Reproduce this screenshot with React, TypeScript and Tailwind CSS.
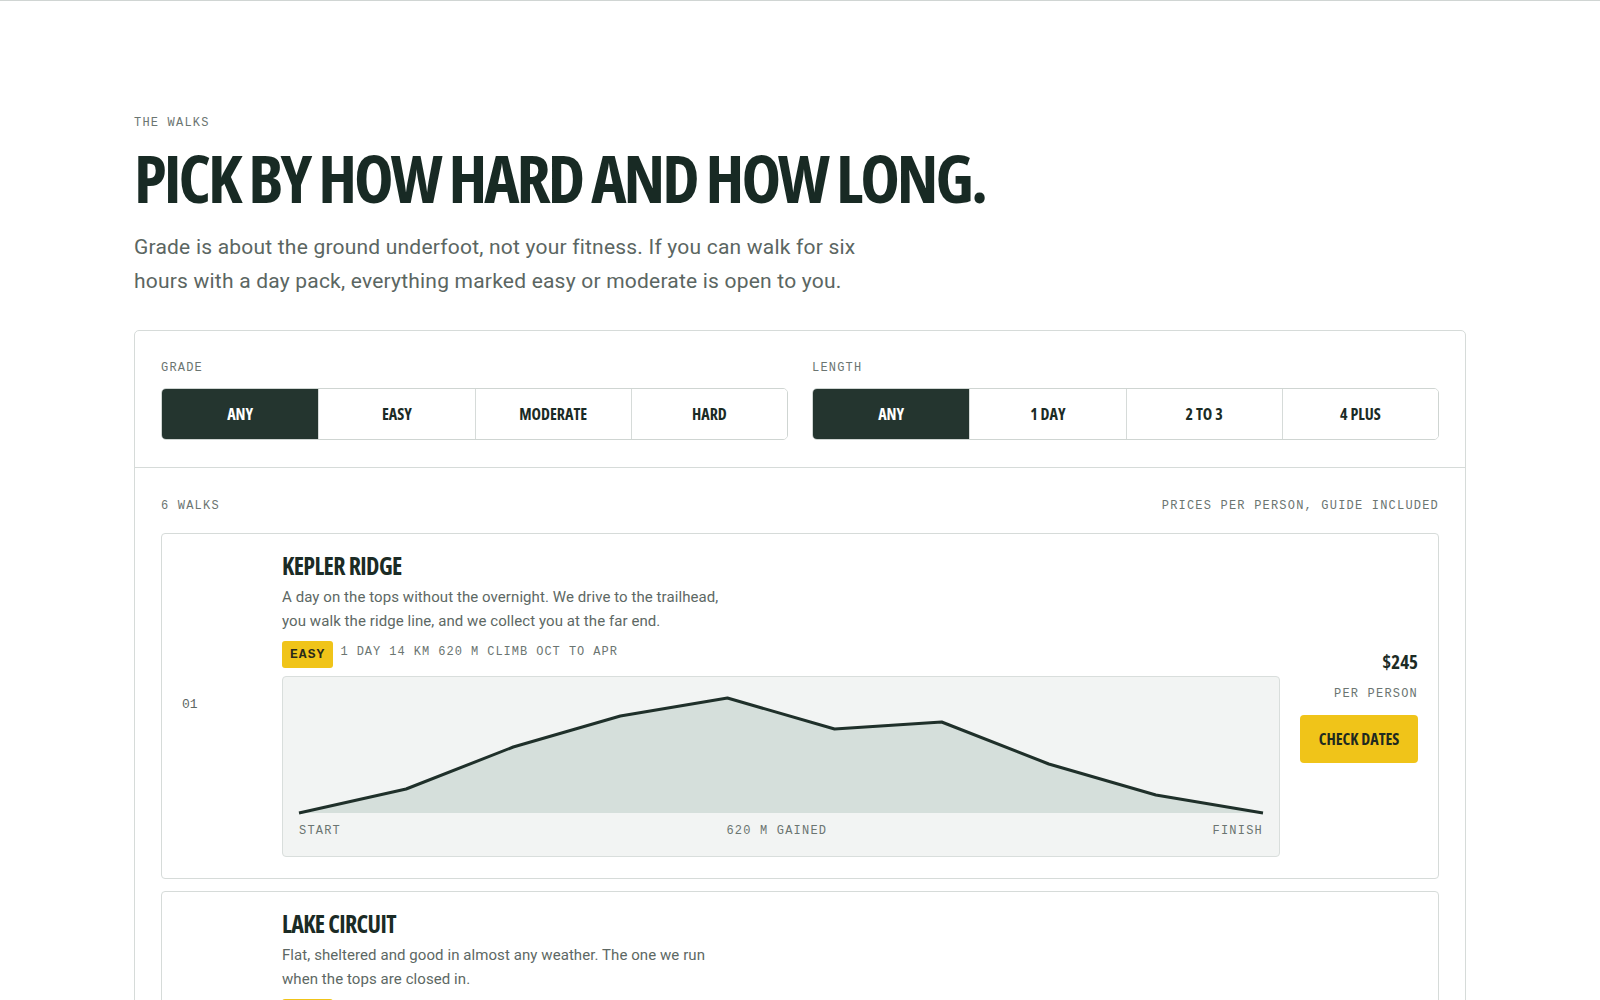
import { useState } from "react";

const display = "font-['Open_Sans','Roboto',sans-serif] font-stretch-[75%]";
const body = "font-['Roboto','Inter',sans-serif]";
const mono = "font-['Liberation_Mono','DejaVu_Sans_Mono',monospace]";

type Walk = {
  id: string;
  name: string;
  blurb: string[];
  grade: "EASY" | "MODERATE" | "HARD";
  meta: string;
  climb: string;
  price: string;
  profile: number[];
};

const walks: Walk[] = [
  {
    id: "01",
    name: "KEPLER RIDGE",
    blurb: [
      "A day on the tops without the overnight. We drive to the trailhead,",
      "you walk the ridge line, and we collect you at the far end.",
    ],
    grade: "EASY",
    meta: "1 DAY 14 KM 620 M CLIMB OCT TO APR",
    climb: "620 M GAINED",
    price: "$245",
    profile: [0, 24, 66, 97, 115, 84, 91, 49, 18, 0],
  },
  {
    id: "02",
    name: "LAKE CIRCUIT",
    blurb: [
      "Flat, sheltered and good in almost any weather. The one we run",
      "when the tops are closed in.",
    ],
    grade: "EASY",
    meta: "1 DAY 11 KM 140 M CLIMB ALL YEAR",
    climb: "140 M GAINED",
    price: "$180",
    profile: [0, 10, 18, 12, 22, 14, 20, 11, 6, 0],
  },
];

function Segmented({ label, options }: { label: string; options: string[] }) {
  const [active, setActive] = useState(0);
  return (
    <div className="flex-1">
      <p className={`${mono} text-[12px] tracking-[0.1em] text-[#6b7571] mb-[14px] leading-none`}>{label}</p>
      <div className="grid grid-cols-4 h-[52px] border border-[#cfd5d2] rounded-[5px] overflow-hidden">
        {options.map((o, i) => (
          <button
            key={o}
            onClick={() => setActive(i)}
            className={`${display} font-bold text-[16px] ${i > 0 ? "border-l border-[#d6dbd9]" : ""} ${
              active === i ? "bg-[#24352f] text-white" : "bg-white text-[#1b2b25]"
            }`}
          >
            {o}
          </button>
        ))}
      </div>
    </div>
  );
}

function Profile({ points }: { points: number[] }) {
  const step = 1000 / (points.length - 1);
  const line = points.map((p, i) => `${i * step},${120 - p}`).join(" ");
  return (
    <svg viewBox="0 0 1000 120" preserveAspectRatio="none" className="w-full h-[120px] block overflow-visible">
      <polygon points={`0,120 ${line} 1000,120`} fill="#d5dfdb" />
      <polyline
        points={line}
        fill="none"
        stroke="#1f302a"
        strokeWidth="3"
        vectorEffect="non-scaling-stroke"
        strokeLinejoin="round"
      />
    </svg>
  );
}

function WalkCard({ walk }: { walk: Walk }) {
  return (
    <div className="grid grid-cols-[80px_1fr_118px] gap-5 items-center border border-[#d6dbd9] rounded-[4px] px-5 pt-[18px] pb-[21px] bg-white">
      <span className={`${mono} text-[13px] text-[#5d6864]`}>{walk.id}</span>
      <div>
        <h3 className={`${display} font-bold text-[24px] leading-[28px] tracking-[-0.025em] text-[#1b2b25]`}>{walk.name}</h3>
        <p className={`${body} text-[15px] leading-[24px] tracking-[0.005em] text-[#5d6864] mt-[5px]`}>
          {walk.blurb[0]}
          <br />
          {walk.blurb[1]}
        </p>
        <div className="flex items-start gap-[7px] mt-2">
          <span className={`${mono} font-bold text-[13px] tracking-[0.08em] bg-[#f0c419] text-[#2a2a1a] rounded-[3px] h-[27px] px-2 flex items-center`}>
            {walk.grade}
          </span>
          <span className={`${mono} text-[12px] tracking-[0.08em] text-[#6b7571] leading-none mt-[5px]`}>{walk.meta}</span>
        </div>
        <div className="mt-2 bg-[#f2f4f3] border border-[#d9dedc] rounded-[4px] px-4 pt-4 pb-[19px]">
          <Profile points={walk.profile} />
          <div className={`${mono} flex justify-between text-[12px] leading-none tracking-[0.1em] text-[#6b7571] mt-3`}>
            <span>START</span>
            <span>{walk.climb}</span>
            <span>FINISH</span>
          </div>
        </div>
      </div>
      <div className="flex flex-col items-end mt-[6px]">
        <span className={`${display} font-bold text-[19px] leading-none text-[#1b2b25]`}>{walk.price}</span>
        <span className={`${mono} text-[12px] leading-none tracking-[0.1em] text-[#6b7571] mt-4`}>PER PERSON</span>
        <button className={`${display} font-bold text-[16px] text-[#1f2a20] bg-[#f0c419] rounded-[4px] w-[118px] h-[48px] mt-[15px]`}>
          CHECK DATES
        </button>
      </div>
    </div>
  );
}

export default function App() {
  return (
    <div className="min-h-screen bg-white border-t border-[#d0d5d3]">
      <div className="w-[1332px] mx-auto pt-[116px] pb-16">
        <p className={`${mono} text-[12px] leading-none tracking-[0.1em] text-[#6b7571]`}>THE WALKS</p>
        <h1 className={`${display} font-bold text-[67px] leading-none tracking-[-0.045em] text-[#182a24] mt-[15px] whitespace-nowrap`}>
          PICK BY HOW HARD AND HOW LONG.
        </h1>
        <p className={`${body} text-[21px] leading-[34px] tracking-[0.01em] text-[#5b6662] mt-[19px] max-w-[750px]`}>
          Grade is about the ground underfoot, not your fitness. If you can walk for six hours with a day pack,
          everything marked easy or moderate is open to you.
        </p>

        <div className="mt-8 border border-[#d6dbd9] rounded-[5px]">
          <div className="flex gap-6 px-[26px] pt-[31px] pb-[27px] border-b border-[#d6dbd9]">
            <Segmented label="GRADE" options={["ANY", "EASY", "MODERATE", "HARD"]} />
            <Segmented label="LENGTH" options={["ANY", "1 DAY", "2 TO 3", "4 PLUS"]} />
          </div>
          <div className="px-[26px] pt-[32px]">
            <div className={`${mono} flex justify-between text-[12px] leading-none tracking-[0.1em] text-[#6b7571] mb-[21px]`}>
              <span>6 WALKS</span>
              <span>PRICES PER PERSON, GUIDE INCLUDED</span>
            </div>
            <div className="flex flex-col gap-3">
              {walks.map((w) => (
                <WalkCard key={w.id} walk={w} />
              ))}
            </div>
          </div>
        </div>
      </div>
    </div>
  );
}
